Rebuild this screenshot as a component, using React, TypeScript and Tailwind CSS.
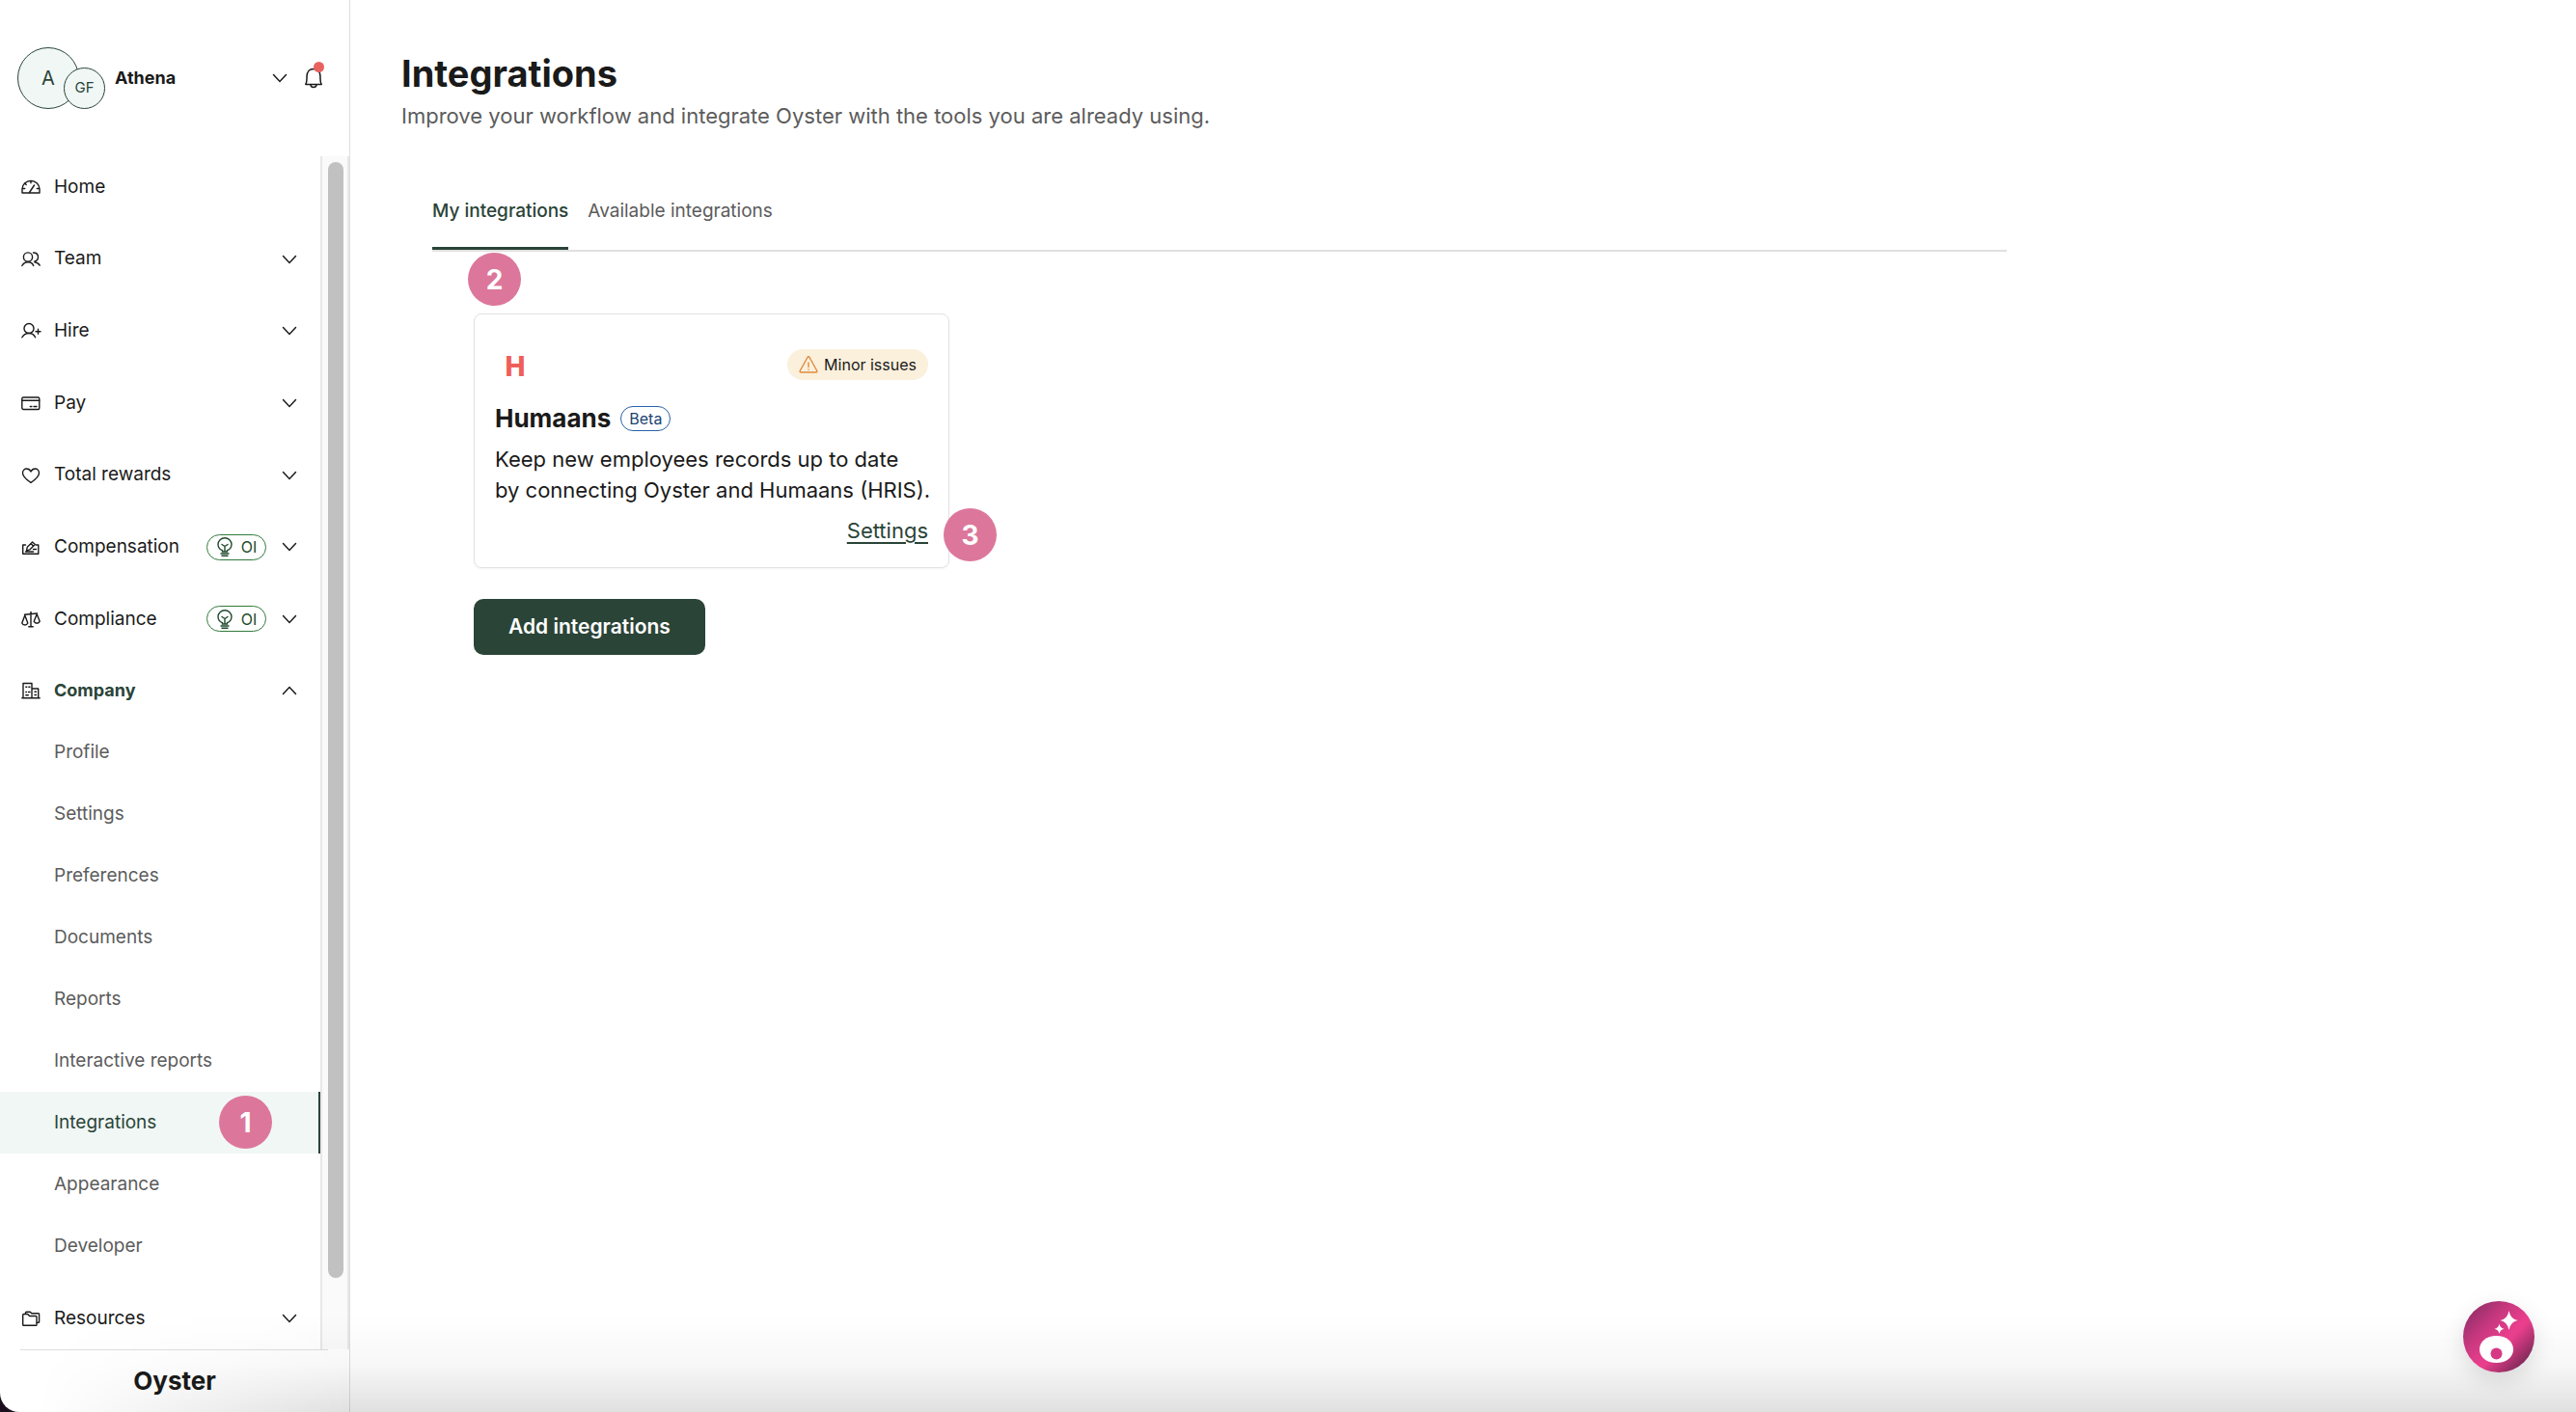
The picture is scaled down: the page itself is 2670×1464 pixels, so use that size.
import type React from "react"
import { useState } from "react"

interface NavItem {
  label: string
  icon: React.ReactNode
  expandable?: boolean
  oi?: boolean
  children?: string[]
}

const Icon = ({ children }: { children: React.ReactNode }) => (
  <svg
    viewBox="0 0 20 20"
    className="h-5 w-5 shrink-0 overflow-visible"
    fill="none"
    stroke="#1a1a1a"
    strokeWidth="1.4"
    strokeLinecap="round"
    strokeLinejoin="round"
    aria-hidden="true"
  >
    {children}
  </svg>
)

const Chevron = ({ up = false }: { up?: boolean }) => (
  <svg viewBox="0 0 16 10" className="h-2.5 w-4 shrink-0" fill="none" stroke="#1a1a1a" strokeWidth="1.5" strokeLinecap="round" aria-hidden="true">
    {up ? <path d="M1.5 8.5 8 1.5l6.5 7" /> : <path d="M1.5 1.5 8 8.5l6.5-7" />}
  </svg>
)

const navItems: NavItem[] = [
  {
    label: "Home",
    icon: (
      <Icon>
        <path d="M1 16v-4a9 8.500 0 0 1 18 0v4H1Z" />
        <path d="M8.500 15.500 13.500 8M10 3.800v2M1.500 11.500h2.200M16.300 11.500h2.200M4 6.200l1.200 1.200" />
      </Icon>
    ),
  },
  {
    label: "Team",
    icon: (
      <Icon>
        <circle cx="7" cy="7.500" r="4.600" />
        <path d="M.8 16.500c1.500-2.500 3.500-3.700 6.200-3.700s4.700 1.200 5.700 3.700" />
        <path d="M12.500 3c3 0 5 1.800 5 4.500 0 2.400-1.500 4-3.600 4.500v.8c2.500.3 4.200 1.500 5.300 3.400" />
      </Icon>
    ),
    expandable: true,
  },
  {
    label: "Hire",
    icon: (
      <Icon>
        <circle cx="8" cy="7.500" r="5" />
        <path d="M.9 16.800c1.400-2.700 3.800-4.300 7.100-4.300s5.500 1.600 6.600 4.300" />
        <path d="M15 10.800h5M17.500 8.300v5" />
      </Icon>
    ),
    expandable: true,
  },
  {
    label: "Pay",
    icon: (
      <Icon>
        <rect x=".8" y="4" width="18" height="12.500" rx="1.500" />
        <path d="M.8 7.300h18M9.300 13.500h1.600M13 13.500h3" />
      </Icon>
    ),
    expandable: true,
  },
  {
    label: "Total rewards",
    icon: (
      <Icon>
        <path d="M10 17.500C5 13.800 1.500 11 1.500 7.400 1.500 4.800 3.400 3 5.600 3 7.500 3 9.200 4.200 10 6c.8-1.800 2.500-3 4.400-3 2.200 0 4.100 1.800 4.100 4.400 0 3.600-3.500 6.400-8.500 10.100Z" />
      </Icon>
    ),
    expandable: true,
  },
  {
    label: "Compensation",
    icon: (
      <Icon>
        <path d="M4.500 8H1.700v9.300h16.100V8h-2.500" />
        <path d="m5.500 13.800.8-3.600L11.600 5l2.700 2.500-5.300 5.300-3.500 1ZM10 6.600l2.700 2.600M4.500 15h8M12.500 12.500h3" />
      </Icon>
    ),
    expandable: true,
    oi: true,
  },
  {
    label: "Compliance",
    icon: (
      <Icon>
        <path d="M10 2.500v15M7.800 17.700h4.400M3.500 5.300 16.500 4" />
        <path d="m3.800 6-3 8c1 2.600 5 2.600 6 0l-3-8ZM16.200 4.800l-3 7.500c1 2.500 5 2.500 6 0l-3-7.500Z" />
      </Icon>
    ),
    expandable: true,
    oi: true,
  },
  {
    label: "Company",
    icon: (
      <Icon>
        <path d="M.8 17.800h18.400M2 17.500V2.500h9v15M11 8h6.700v9.500" />
        <path d="M4.800 6.300h1M7.800 6.300H9M4.800 11.500h.6M7.500 11.500H9M4.800 14.800h2.500M14 11.300h1.500M14 14.500h1.500" />
      </Icon>
    ),
    expandable: true,
    children: [
      "Profile",
      "Settings",
      "Preferences",
      "Documents",
      "Reports",
      "Interactive reports",
      "Integrations",
      "Appearance",
      "Developer",
    ],
  },
  {
    label: "Resources",
    icon: (
      <Icon>
        <path d="M1.700 16.500V6.300q0-.8.800-.8h4.300l1.800 2h6.600q.8 0 .8.800v8.200q0 .8-.8.800H2.500q-.8 0-.8-.8Z" />
        <path d="M4.500 5.200V4q0-.8.800-.8h4l1.500 1.600h7q.8 0 .8.800v7.800q0 .8-.8.800h-1.500" />
      </Icon>
    ),
    expandable: true,
  },
]

const OiBadge = () => (
  <span className="flex h-[27px] w-[62px] items-center justify-center gap-2 rounded-full border border-[#2f7a3b] text-base text-[#1f4a2c]">
    <svg viewBox="0 0 18 20" className="h-5 w-[18px]" fill="none" stroke="currentColor" strokeWidth="1.4" strokeLinecap="round" aria-hidden="true">
      <path d="M6.500 15v-1.300A7 7 0 0 1 2 7.500a7 6.800 0 0 1 14 0 7 7 0 0 1-4.500 6.200V15h-5ZM9 14V9.500M6 7.500l3 2 3-2M5 17h8M6 19.200h6" />
    </svg>
    OI
  </span>
)

const Marker = ({ children, className = "" }: { children: React.ReactNode; className?: string }) => (
  <span
    className={`absolute flex size-[55px] items-center justify-center rounded-full bg-[#dc779b] text-[28px] font-bold text-white ${className}`}
  >
    {children}
  </span>
)

const Sidebar = () => (
  <aside className="flex w-[363px] shrink-0 flex-col border-r border-[#dedede]">
    <header className="flex h-[162px] shrink-0 items-center pl-[18px] pr-7">
      <div className="relative h-16 w-[91px] shrink-0 text-[#2a4437]">
        <div className="flex size-16 items-center justify-center rounded-full border border-[#2a4437] bg-[#f1f7f5] text-xl">A</div>
        <div className="absolute bottom-0 right-0 flex size-[43px] items-center justify-center rounded-full border border-[#2a4437] bg-[#f1f7f5] text-[15px]">
          GF
        </div>
      </div>
      <button type="button" className="ml-2.5 flex flex-1 items-center justify-between text-lg font-bold">
        Athena
        <Chevron />
      </button>
      <button type="button" aria-label="Notifications" className="relative ml-[18px]">
        <svg viewBox="0 0 18 22" className="h-[22px] w-[18px]" fill="none" stroke="#1a1a1a" strokeWidth="1.5" strokeLinejoin="round" aria-hidden="true">
          <path d="M.8 17.500c1.500-2.500 1.200-5 1.200-8C2 4.500 5 1.500 9 1.500s7 3 7 8c0 3-.3 5.500 1.200 8H.8ZM6 17.800c.4 3.500 5.600 3.500 6 0" />
        </svg>
        <span className="absolute -right-0.5 -top-1.5 size-[11px] rounded-full bg-[#e8625f]" />
      </button>
    </header>

    <div className="flex min-h-0 flex-1">
      <nav className="flex min-w-0 flex-1 flex-col justify-between">
        {navItems.map((item) => (
          <div key={item.label}>
            <button type="button" className="flex h-16 w-full items-center pl-[22px] pr-6">
              {item.icon}
              <span className={`ml-3.5 ${item.children ? "text-lg font-bold text-[#2a4437]" : "text-[19px]"}`}>{item.label}</span>
              <span className="ml-auto flex items-center gap-4">
                {item.oi && <OiBadge />}
                {item.expandable && <Chevron up={!!item.children} />}
              </span>
            </button>
            {item.children?.map((child) => (
              <a
                key={child}
                href="#"
                className={`relative flex h-16 items-center pl-14 text-[19px] ${
                  child === "Integrations" ? "border-r-2 border-[#2a4437] bg-[#f1f7f5] text-[#2a4437]" : "text-[#5c5c5c]"
                }`}
              >
                {child}
                {child === "Integrations" && <Marker className="right-12 top-1">1</Marker>}
              </a>
            ))}
          </div>
        ))}
      </nav>
      <div className="w-[30px] shrink-0 border-x-2 border-[#e8e8e8] bg-[#fafafa] pl-1.5 pr-1 pt-1.5">
        <div className="h-[94%] rounded-full bg-[#c1c1c1]" />
      </div>
    </div>

    <footer className="h-[65px] shrink-0">
      <div className="ml-[21px] mr-[22px] border-t border-[#dedede]" />
      <p className="pt-3.5 text-center text-[26px] font-bold leading-9">Oyster</p>
    </footer>
  </aside>
)

const IntegrationCard = () => (
  <article className="relative w-[493px] rounded-lg border border-[#e2e2e2] px-[21px] pb-5 pt-9 shadow-xs">
    <Marker className="-left-[7px] -top-16">2</Marker>
    <div className="flex items-start justify-between">
      <div className="flex h-9 w-[42px] items-center justify-center text-[28px] font-extrabold text-[#ef5f5a]">H</div>
      <span className="flex h-8 items-center gap-1.5 rounded-full bg-[#faf0dc] px-3 text-base">
        <svg viewBox="0 0 20 20" className="size-5" fill="none" stroke="#e08a3c" strokeWidth="1.4" strokeLinejoin="round" strokeLinecap="round" aria-hidden="true">
          <path d="M9 2.500q1-1.500 2 0l7.800 14q.5 1.500-1 1.500H2.200q-1.500 0-1-1.500L9 2.500ZM10 8v4.500M10 15v.3" />
        </svg>
        Minor issues
      </span>
    </div>
    <div className="mt-5 flex items-center gap-2.5">
      <h2 className="text-[26px] font-bold leading-8">Humaans</h2>
      <span className="flex h-[26px] items-center rounded-full border border-[#2a62a8] px-2 text-base text-[#1d4373]">Beta</span>
    </div>
    <p className="mt-2.5 whitespace-nowrap text-[22px] leading-8">
      Keep new employees records up to date
      <br />
      by connecting Oyster and Humaans (HRIS).
    </p>
    <div className="mt-2.5 text-right leading-8">
      <a href="#" className="text-[22px] text-[#2a4437] underline decoration-2 underline-offset-4">
        Settings
      </a>
    </div>
    <Marker className="-right-[50px] bottom-1.5">3</Marker>
  </article>
)

const tabs = ["My integrations", "Available integrations"]

const App: React.FC = () => {
  const [activeTab, setActiveTab] = useState(tabs[0])

  return (
    <div className="bg-[#1c1020]">
      <div className="relative flex h-screen overflow-hidden rounded-bl-[20px] bg-white font-['Inter',sans-serif] text-[#1a1a1a]">
        <Sidebar />

        <main className="min-w-0 flex-1 pl-[53px] pt-[50px]">
          <h1 className="text-[38px] font-bold leading-[52px]">Integrations</h1>
          <p className="pt-0.5 text-[22px] leading-8 text-[#5c5c5c]">
            Improve your workflow and integrate Oyster with the tools you are already using.
          </p>

          <div className="ml-8 mt-[58px] max-w-[1632px]">
            <div role="tablist" className="flex gap-5 border-b-2 border-[#e0e0e0] text-[19px]">
              {tabs.map((tab) => (
                <button
                  key={tab}
                  type="button"
                  role="tab"
                  aria-selected={tab === activeTab}
                  onClick={() => setActiveTab(tab)}
                  className={`h-[65px] border-b-3 pb-3 ${
                    tab === activeTab ? "border-[#2a4437] font-medium text-[#2a4437]" : "border-transparent text-[#5c5c5c]"
                  }`}
                >
                  {tab}
                </button>
              ))}
            </div>

            <div className="flex flex-col items-start gap-8 pl-[43px] pt-16">
              <IntegrationCard />
              <button type="button" className="h-[58px] rounded-[10px] bg-[#2a4437] px-9 text-[21px] font-semibold text-white">
                Add integrations
              </button>
            </div>
          </div>
        </main>

        {/* soft shade along the bottom edge */}
        <div className="pointer-events-none absolute inset-x-0 bottom-0 h-[100px] bg-linear-to-b from-transparent via-black/3 to-black/12 mask-[linear-gradient(to_right,transparent_40px,black_360px)]" />

        <button
          type="button"
          aria-label="Open assistant"
          className="absolute bottom-[41px] right-[43px] size-[74px] rounded-full bg-[linear-gradient(135deg,#7d2b60_0%,#c93880_35%,#e83e8c_55%,#e83e8c_60%,#5e2348_95%)] shadow-[0_8px_24px_rgba(0,0,0,0.12)]"
        >
          <svg viewBox="0 0 74 74" className="size-full" fill="#fff" aria-hidden="true">
            <path d="M47.500 10q1.500 8.500 9 10-7.500 1.500-9 10-1.500-8.500-9-10 7.500-1.500 9-10ZM37.500 23.500q.8 4.500 5 5.300-4.200.8-5 5.200-.8-4.400-5-5.200 4.200-.8 5-5.300Z" />
            <path d="M34.500 36c10 0 17.500 6 17.500 14s-7 14-17.500 14S17 58 17 50s7.500-14 17.500-14Z" />
            <circle cx="34.500" cy="54.500" r="6" fill="#d63a85" />
          </svg>
        </button>
      </div>
    </div>
  )
}

export default App
